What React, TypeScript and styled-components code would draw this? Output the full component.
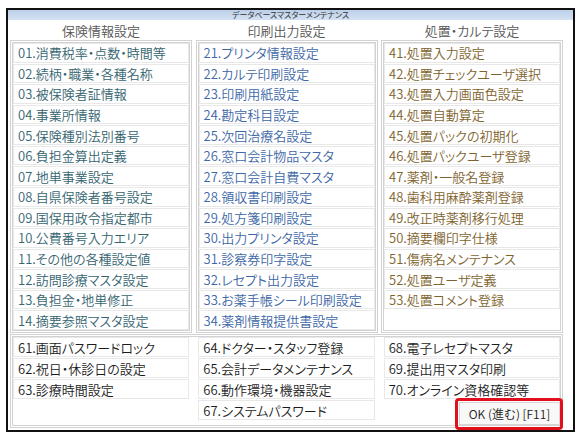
import styled, { createGlobalStyle } from "styled-components";

type Tone = "insurance" | "print" | "treatment" | "system";

const TONE_COLORS: Record<Tone, string> = {
  insurance: "#35646f",
  print: "#3d67a6",
  treatment: "#7e632d",
  system: "#1c1c1c",
};

interface MenuGroup {
  title: string;
  tone: Tone;
  items: string[];
}

const GROUPS: MenuGroup[] = [
  {
    title: "保険情報設定",
    tone: "insurance",
    items: [
      "01.消費税率・点数・時間等",
      "02.続柄・職業・各種名称",
      "03.被保険者証情報",
      "04.事業所情報",
      "05.保険種別法別番号",
      "06.負担金算出定義",
      "07.地単事業設定",
      "08.自県保険者番号設定",
      "09.国保用政令指定都市",
      "10.公費番号入力エリア",
      "11.その他の各種設定値",
      "12.訪問診療マスタ設定",
      "13.負担金・地単修正",
      "14.摘要参照マスタ設定",
    ],
  },
  {
    title: "印刷出力設定",
    tone: "print",
    items: [
      "21.プリンタ情報設定",
      "22.カルテ印刷設定",
      "23.印刷用紙設定",
      "24.勘定科目設定",
      "25.次回治療名設定",
      "26.窓口会計物品マスタ",
      "27.窓口会計自費マスタ",
      "28.領収書印刷設定",
      "29.処方箋印刷設定",
      "30.出力プリンタ設定",
      "31.診察券印字設定",
      "32.レセプト出力設定",
      "33.お薬手帳シール印刷設定",
      "34.薬剤情報提供書設定",
    ],
  },
  {
    title: "処置・カルテ設定",
    tone: "treatment",
    items: [
      "41.処置入力設定",
      "42.処置チェックユーザ選択",
      "43.処置入力画面色設定",
      "44.処置自動算定",
      "45.処置パックの初期化",
      "46.処置パックユーザ登録",
      "47.薬剤・一般名登録",
      "48.歯科用麻酔薬剤登録",
      "49.改正時薬剤移行処理",
      "50.摘要欄印字仕様",
      "51.傷病名メンテナンス",
      "52.処置ユーザ定義",
      "53.処置コメント登録",
    ],
  },
];

const SYSTEM_COLUMNS: string[][] = [
  ["61.画面パスワードロック", "62.祝日・休診日の設定", "63.診療時間設定"],
  [
    "64.ドクター・スタッフ登録",
    "65.会計データメンテナンス",
    "66.動作環境・機器設定",
    "67.システムパスワード",
  ],
  ["68.電子レセプトマスタ", "69.提出用マスタ印刷", "70.オンライン資格確認等"],
];

const GlobalStyle = createGlobalStyle`
  body {
    margin: 0;
    background: #fff;
    font-family: "Noto Sans CJK JP", "Noto Sans", sans-serif;
    font-feature-settings: "palt";
  }
`;

export default function App() {
  return (
    <>
      <GlobalStyle />
      <Page>
        <Window>
          <TitleBar>データベースマスターメンテナンス</TitleBar>
          <Content>
            <HeaderRow>
              {GROUPS.map((group) => (
                <GroupTitle key={group.title}>{group.title}</GroupTitle>
              ))}
            </HeaderRow>
            <GroupRow>
              {GROUPS.map((group) => (
                <GroupPanel key={group.title}>
                  {group.items.map((item) => (
                    <MenuItem key={item} $tone={group.tone}>
                      {item}
                    </MenuItem>
                  ))}
                </GroupPanel>
              ))}
            </GroupRow>
            <SystemPanel>
              {SYSTEM_COLUMNS.map((column, index) => (
                <SystemColumn key={index}>
                  {column.map((item) => (
                    <MenuItem key={item} $tone="system" $fixed>
                      {item}
                    </MenuItem>
                  ))}
                  {index === SYSTEM_COLUMNS.length - 1 && (
                    <OkWrap>
                      <OkButton type="button">OK (進む) [F11]</OkButton>
                      <Highlight />
                    </OkWrap>
                  )}
                </SystemColumn>
              ))}
            </SystemPanel>
          </Content>
        </Window>
      </Page>
    </>
  );
}

const Page = styled.div`
  padding: 8px 0 0 6px;
`;

const Window = styled.div`
  box-sizing: border-box;
  width: 569px;
  height: 424px;
  border: 2px solid #111;
  display: flex;
  flex-direction: column;
`;

const TitleBar = styled.div`
  height: 10px;
  background: linear-gradient(#bcd0e9, #d3e1f2);
  color: #333;
  font-size: 8px;
  line-height: 10px;
  text-align: center;
  white-space: nowrap;
`;

const Content = styled.div`
  padding: 0 2px;
  display: flex;
  flex-direction: column;
`;

const HeaderRow = styled.div`
  display: grid;
  grid-template-columns: repeat(3, 182px);
  column-gap: 3.5px;
  height: 20px;
  align-items: center;
`;

const GroupTitle = styled.div`
  text-align: center;
  color: #555;
  font-size: 13px;
  font-weight: 350;
  line-height: 1;
`;

const GroupRow = styled.div`
  display: grid;
  grid-template-columns: repeat(3, 182px);
  column-gap: 3.5px;
  height: 293px;
`;

const GroupPanel = styled.div`
  box-sizing: border-box;
  border: 3px double #d2d2d2;
  display: grid;
  grid-template-rows: repeat(14, 1fr);
  row-gap: 1px;
  min-height: 0;
`;

const MenuItem = styled.div<{ $tone: Tone; $fixed?: boolean }>`
  box-sizing: border-box;
  ${({ $fixed }) => ($fixed ? "height: 20px;" : "")}
  border: 1px solid #e8e8e8;
  padding-left: 4px;
  display: flex;
  align-items: center;
  color: ${({ $tone }) => TONE_COLORS[$tone]};
  font-size: 13px;
  font-weight: 350;
  line-height: 1;
  white-space: nowrap;
  overflow: hidden;
`;

const SystemPanel = styled.div`
  box-sizing: border-box;
  margin-top: 1px;
  width: 553px;
  height: 94px;
  border: 3px double #d2d2d2;
  display: grid;
  grid-template-columns: repeat(3, 1fr);
  column-gap: 9px;
`;

const SystemColumn = styled.div`
  display: flex;
  flex-direction: column;
  gap: 1px;
  min-width: 0;
`;

const OkWrap = styled.div`
  position: relative;
  align-self: flex-end;
  margin-top: 2px;
`;

const OkButton = styled.button`
  box-sizing: border-box;
  display: block;
  width: 101px;
  height: 23px;
  padding: 0;
  border: 1px solid #d6d6d6;
  background: #f8f8f8;
  color: #222;
  font-family: inherit;
  font-size: 12px;
  font-weight: 350;
  line-height: 1;
  white-space: nowrap;
`;

// red call-out frame drawn round the OK button
const Highlight = styled.span`
  position: absolute;
  top: -4px;
  left: -4px;
  right: -3px;
  bottom: -5px;
  border: 3px solid #e2101c;
  border-radius: 4px;
  pointer-events: none;
`;
